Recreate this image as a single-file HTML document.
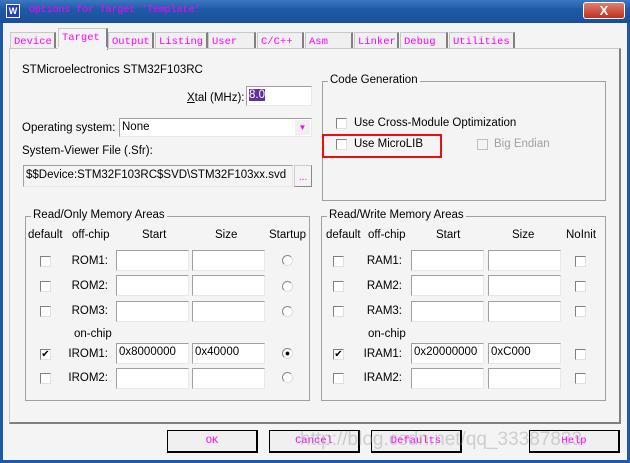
<!DOCTYPE html><html><head><style>
*{box-sizing:border-box;margin:0;padding:0}
body{width:630px;height:463px;overflow:hidden;background:#f4f4f4;font-family:"Liberation Sans",sans-serif;font-size:11.5px;color:#000;position:relative}
.a{position:absolute;white-space:nowrap}
.mono{font-family:"Liberation Mono",monospace;color:#f0f;font-size:10.5px}
.in{position:absolute;background:#fff;border:1px solid #a0a0a0;border-right-color:#e8e8e8;border-bottom-color:#e8e8e8;height:21px;padding:2px 2px;font-size:11.5px}
.cb{position:absolute;width:11px;height:11px;background:#fff;border:1px solid #808080;border-right-color:#e0e0e0;border-bottom-color:#e0e0e0;font-size:10px;line-height:9px;text-align:center}
.rd{position:absolute;width:11px;height:11px;border-radius:50%;border:1px solid #888;border-right-color:#ddd;border-bottom-color:#ddd;background:#fff}
.gb{position:absolute;border:1px solid #a0a0a0}
.gt{position:absolute;background:#f4f4f4;padding:0 2px;top:-8px;left:5px}
.tab{position:absolute;top:30px;height:18px;border:1px solid #c8c8c8;border-bottom:none;border-right:2px solid #808080;padding:3px 3px 0;background:#f0f0f0;overflow:hidden}
.btn{position:absolute;top:430px;width:91px;height:23px;border:1px solid #000;border-right-width:2px;border-bottom-width:2px;background:#f0f0f0;text-align:center;line-height:20px}
.lbl{position:absolute;text-align:right;width:50px}
</style></head><body>
<div class="a" style="left:0;top:0;width:630px;height:23px;background:linear-gradient(#3a78c0,#1f5aa8 40%,#1a4f9a)"></div>
<div class="a" style="left:0;top:23px;width:3px;height:440px;background:#1f5aa8"></div>
<div class="a" style="left:627px;top:23px;width:3px;height:440px;background:#1f5aa8"></div>
<div class="a" style="left:0;top:460px;width:630px;height:3px;background:#1f5aa8"></div>
<div class="a" style="left:6px;top:4px;width:14px;height:14px;background:#2040c0;border:1px solid #fff;color:#fff;font-size:9px;line-height:12px;text-align:center;font-weight:bold">W</div>
<div class="a mono" style="left:29px;top:5px;font-size:10px;letter-spacing:-0.1px">Options for Target 'Template'</div>
<div class="a" style="left:583px;top:2px;width:42px;height:17px;border-radius:3px;border:1px solid #fff;background:linear-gradient(#e08070,#c03020);color:#fff;text-align:center;font-weight:bold;font-size:13px;line-height:15px">X</div>

<div class="tab mono" style="left:10px;width:46px;top:32px;height:16px">Device</div>
<div class="tab mono" style="left:58px;width:50px;top:28px;height:22px;background:#f4f4f4">Target</div>
<div class="tab mono" style="left:108px;width:46px;top:32px;height:16px">Output</div>
<div class="tab mono" style="left:155px;width:53px;top:32px;height:16px">Listing</div>
<div class="tab mono" style="left:208px;width:48px;top:32px;height:16px">User</div>
<div class="tab mono" style="left:257px;width:47px;top:32px;height:16px">C/C++</div>
<div class="tab mono" style="left:305px;width:48px;top:32px;height:16px">Asm</div>
<div class="tab mono" style="left:354px;width:45px;top:32px;height:16px">Linker</div>
<div class="tab mono" style="left:400px;width:48px;top:32px;height:16px">Debug</div>
<div class="tab mono" style="left:449px;width:66px;top:32px;height:16px">Utilities</div>
<div class="a" style="left:9px;top:48px;width:612px;height:376px;border:1px solid #c8c8c8;border-right:2px solid #808080;border-bottom:2px solid #808080"></div>
<div class="a" style="left:58px;top:47px;width:49px;height:3px;background:#f4f4f4"></div>

<div class="a" style="left:22px;top:64px">STMicroelectronics STM32F103RC</div>
<div class="a" style="left:187px;top:92px"><u>X</u>tal (MHz):</div>
<div class="in" style="left:246px;top:86px;width:66px;height:20px"><span style="background:#6030a0;color:#fff">8.0</span></div>
<div class="a" style="left:22px;top:122px">Operating system:</div>
<div class="in" style="left:119px;top:118px;width:193px;height:19px;padding-top:2px">None</div>
<div class="a" style="left:295px;top:120px;width:15px;height:15px;background:#f0f0f0;color:#f0f;font-size:8px;text-align:center;line-height:15px">▼</div>
<div class="a" style="left:22px;top:145px">System-Viewer File (.Sfr):</div>
<div class="in" style="left:23px;top:165px;width:270px;height:22px;background:#f4f4f4;padding-top:3px">$$Device:STM32F103RC$SVD\STM32F103xx.svd</div>
<div class="a" style="left:294px;top:165px;width:18px;height:22px;border:1px solid #ccc;border-right-color:#888;border-bottom-color:#888;color:#f0f;text-align:center;line-height:24px;font-size:10px">...</div>

<div class="gb" style="left:322px;top:81px;width:284px;height:120px"><span class="gt">Code Generation</span></div>
<div class="cb" style="left:336px;top:118px"></div><div class="a" style="left:354px;top:117px">Use Cross-Module Optimization</div>
<div class="cb" style="left:336px;top:139px"></div><div class="a" style="left:354px;top:138px">Use MicroLIB</div>
<div class="a" style="left:322px;top:134px;width:120px;height:24px;border:2px solid #e81010"></div>
<div class="cb" style="left:477px;top:139px;background:#f4f4f4;border-color:#c0c0c0"></div><div class="a" style="left:494px;top:138px;color:#a0a0a0">Big Endian</div>

<div class="gb" style="left:25px;top:216px;width:285px;height:185px"><span class="gt">Read/Only Memory Areas</span></div>
<div class="a" style="left:28px;top:229px">default</div><div class="a" style="left:72px;top:229px">off-chip</div><div class="a" style="left:142px;top:229px">Start</div><div class="a" style="left:215px;top:229px">Size</div><div class="a" style="left:269px;top:229px">Startup</div>
<div class="cb" style="left:40px;top:256px"></div><div class="lbl" style="left:58px;top:255px">ROM1:</div><div class="in" style="left:116px;top:250px;width:73px"></div><div class="in" style="left:192px;top:250px;width:73px"></div><div class="rd" style="left:282px;top:255px"></div>
<div class="cb" style="left:40px;top:281px"></div><div class="lbl" style="left:58px;top:280px">ROM2:</div><div class="in" style="left:116px;top:275px;width:73px"></div><div class="in" style="left:192px;top:275px;width:73px"></div><div class="rd" style="left:282px;top:281px"></div>
<div class="cb" style="left:40px;top:306px"></div><div class="lbl" style="left:58px;top:305px">ROM3:</div><div class="in" style="left:116px;top:301px;width:73px"></div><div class="in" style="left:192px;top:301px;width:73px"></div><div class="rd" style="left:282px;top:306px"></div>
<div class="a" style="left:74px;top:328px">on-chip</div>
<div class="cb" style="left:40px;top:349px">✔</div><div class="lbl" style="left:58px;top:348px">IROM1:</div><div class="in" style="left:116px;top:343px;width:73px">0x8000000</div><div class="in" style="left:192px;top:343px;width:73px">0x40000</div><div class="rd" style="left:282px;top:348px;background:radial-gradient(#000 25%,#fff 35%)"></div>
<div class="cb" style="left:40px;top:373px"></div><div class="lbl" style="left:58px;top:372px">IROM2:</div><div class="in" style="left:116px;top:368px;width:73px"></div><div class="in" style="left:192px;top:368px;width:73px"></div><div class="rd" style="left:282px;top:372px"></div>

<div class="gb" style="left:321px;top:216px;width:285px;height:185px"><span class="gt">Read/Write Memory Areas</span></div>
<div class="a" style="left:326px;top:229px">default</div><div class="a" style="left:368px;top:229px">off-chip</div><div class="a" style="left:436px;top:229px">Start</div><div class="a" style="left:512px;top:229px">Size</div><div class="a" style="left:566px;top:229px">NoInit</div>
<div class="cb" style="left:333px;top:256px"></div><div class="lbl" style="left:352px;top:255px">RAM1:</div><div class="in" style="left:411px;top:250px;width:73px"></div><div class="in" style="left:488px;top:250px;width:73px"></div><div class="cb" style="left:575px;top:256px"></div>
<div class="cb" style="left:333px;top:281px"></div><div class="lbl" style="left:352px;top:280px">RAM2:</div><div class="in" style="left:411px;top:275px;width:73px"></div><div class="in" style="left:488px;top:275px;width:73px"></div><div class="cb" style="left:575px;top:281px"></div>
<div class="cb" style="left:333px;top:306px"></div><div class="lbl" style="left:352px;top:305px">RAM3:</div><div class="in" style="left:411px;top:301px;width:73px"></div><div class="in" style="left:488px;top:301px;width:73px"></div><div class="cb" style="left:575px;top:306px"></div>
<div class="a" style="left:368px;top:328px">on-chip</div>
<div class="cb" style="left:333px;top:349px">✔</div><div class="lbl" style="left:352px;top:348px">IRAM1:</div><div class="in" style="left:411px;top:343px;width:73px">0x20000000</div><div class="in" style="left:488px;top:343px;width:73px">0xC000</div><div class="cb" style="left:575px;top:349px"></div>
<div class="cb" style="left:333px;top:373px"></div><div class="lbl" style="left:352px;top:372px">IRAM2:</div><div class="in" style="left:411px;top:368px;width:73px"></div><div class="in" style="left:488px;top:368px;width:73px"></div><div class="cb" style="left:575px;top:373px"></div>

<div class="btn mono" style="left:167px">OK</div>
<div class="btn mono" style="left:269px">Cancel</div>
<div class="btn mono" style="left:371px">Defaults</div>
<div class="btn mono" style="left:529px">Help</div>
<div class="a" style="left:300px;top:429px;font-size:19px;color:rgba(150,150,150,0.4);font-family:'Liberation Sans',sans-serif">http://blog.csdn.net/qq_33387833</div>
</body></html>
